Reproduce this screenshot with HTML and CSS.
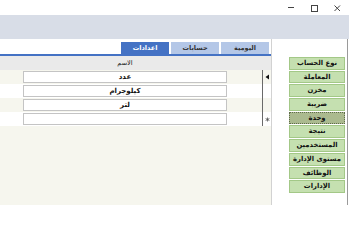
FILE: index.html
```html
<!DOCTYPE html>
<html lang="ar" dir="rtl">
<head>
<meta charset="utf-8">
<link rel="stylesheet" href="styles.css">
</head>
<body>
<div class="window">
  <div class="titlebar">
    <span class="ctl"><svg width="8" height="8" viewBox="0 0 8 8"><path d="M1.5 1.5 L7 7 M7 1.5 L1.5 7" stroke="#444" stroke-width="1"/></svg></span>
    <span class="ctl"><svg width="8" height="8" viewBox="0 0 8 8"><rect x="1.5" y="1.5" width="6" height="6" fill="none" stroke="#444" stroke-width="1"/></svg></span>
    <span class="ctl"><span class="minbar"></span></span>
  </div>
  <div class="band"></div>
  <div class="main">
    <div class="side">
      <div class="btn">نوع الحساب</div>
      <div class="btn">المعاملة</div>
      <div class="btn">مخزن</div>
      <div class="btn">ضريبة</div>
      <div class="btn selected">وحدة</div>
      <div class="btn">نتيجة</div>
      <div class="btn">المستخدمين</div>
      <div class="btn">مستوى الإدارة</div>
      <div class="btn">الوظائف</div>
      <div class="btn">الإدارات</div>
    </div>
    <div class="content">
      <div class="tabs">
        <div class="tab">اليومية</div>
        <div class="tab">حسابات</div>
        <div class="tab active">اعدادات</div>
      </div>
      <div class="grid">
        <div class="head"><span class="sel-h"></span><span class="gap"></span><span class="hcell">الاسم</span><span></span></div>
        <div class="row alt"><span class="sel"><svg width="5" height="6" viewBox="0 0 5 6"><path d="M4 0.5 L0.5 3 L4 5.5 Z" fill="#111"/></svg></span><span class="gap"></span><span class="cell">عدد</span><span></span></div>
        <div class="row"><span class="sel"></span><span class="gap"></span><span class="cell">كيلوجرام</span><span></span></div>
        <div class="row alt"><span class="sel"></span><span class="gap"></span><span class="cell">لتر</span><span></span></div>
        <div class="row"><span class="sel"><svg width="5" height="5" viewBox="0 0 5 5"><path d="M2.5 0.5 L2.5 4.5 M0.6 1.5 L4.4 3.5 M4.4 1.5 L0.6 3.5" stroke="#555" stroke-width="0.8"/></svg></span><span class="gap"></span><span class="cell"></span><span></span></div>
      </div>
    </div>
  </div>
</div>
</body>
</html>
```

FILE: styles.css
```css
html, body {
  margin: 0;
  padding: 0;
  background: #ffffff;
}
body {
  width: 349px;
  height: 205px;
  overflow: hidden;
  font-family: "DejaVu Sans", sans-serif;
}
.window {
  width: 349px;
  height: 205px;
  display: flex;
  flex-direction: column;
}
.titlebar {
  height: 15px;
  box-sizing: border-box;
  background: #ffffff;
  display: flex;
  flex-direction: row;
  justify-content: flex-start;
  align-items: center;
  padding-right: 8px;
  gap: 15px;
}
.ctl {
  width: 8px;
  height: 8px;
  display: flex;
  align-items: center;
  justify-content: center;
}
.ctl svg { display: block; }
.minbar {
  display: block;
  width: 6px;
  height: 1px;
  background: #444;
}
.band {
  height: 24px;
  background: #d8dde7;
}
.main {
  flex: 1;
  display: flex;
  flex-direction: row;
}
.side {
  width: 76px;
  box-sizing: border-box;
  border-right: 1px solid #9a9a9a;
  margin-right: 1px;
  padding-top: 18px;
  padding-right: 2px;
  display: flex;
  flex-direction: column;
  align-items: flex-start;
  gap: 1px;
  background: #ffffff;
}
.btn {
  width: 56px;
  height: 12.7px;
  box-sizing: border-box;
  background: #c5e0b0;
  border: 1px solid #a3c887;
  font-size: 6.8px;
  font-weight: bold;
  color: #111;
  text-align: center;
  line-height: 10.5px;
  white-space: nowrap;
  overflow: hidden;
}
.btn.selected {
  background: #abba8f;
  border: 1px dotted #5f6b4a;
}
.content {
  width: 272px;
  box-sizing: border-box;
  border-right: 1px solid #d2d2d2;
  display: flex;
  flex-direction: column;
}
.tabs {
  height: 17px;
  box-sizing: border-box;
  padding-top: 3px;
  padding-right: 2px;
  border-bottom: 2px solid #4472c4;
  display: flex;
  flex-direction: row;
  gap: 2px;
}
.tab {
  width: 48px;
  height: 12px;
  background: #b4c7e7;
  color: #333;
  font-size: 6.5px;
  font-weight: bold;
  text-align: center;
  line-height: 12px;
}
.tab.active {
  background: #4472c4;
  color: #ffffff;
}
.grid {
  flex: 1;
  background: #f6f6ee;
}
.head, .row {
  display: grid;
  grid-template-columns: 9px 35px 204px 1fr;
  height: 14px;
}
.head {
  background: #eaeaea;
}
.hcell {
  font-size: 6.5px;
  color: #222;
  text-align: center;
  line-height: 14px;
}
.row { background: #ffffff; }
.row.alt { background: #f6f6ee; }
.sel {
  border-left: 1px solid #6a6a6a;
  display: flex;
  align-items: center;
  justify-content: center;
}
.sel svg { display: block; }
.cell {
  margin: 1px 0;
  box-sizing: border-box;
  height: 12px;
  background: #ffffff;
  border: 1px solid #c4c4c4;
  font-size: 7px;
  font-weight: bold;
  color: #111;
  text-align: center;
  line-height: 10px;
}
```
